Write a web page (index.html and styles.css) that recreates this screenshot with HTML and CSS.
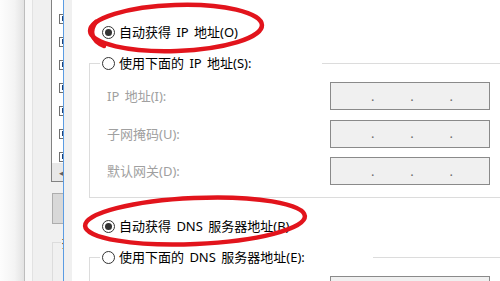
FILE: index.html
```html
<!DOCTYPE html>
<html lang="zh-CN">
<head>
<meta charset="utf-8">
<title>Internet 协议版本 4 (TCP/IPv4) 属性</title>
<link rel="stylesheet" href="styles.css">
</head>
<body>
<div class="screen">
  <div class="shadow"></div>
  <div class="edge"></div>
  <div class="band"></div>
  <div class="gutter"></div>
  <div class="side">
    <div class="listbox">
      <div class="items">
        <div class="item"><span class="chk"></span></div>
        <div class="item"><span class="chk"></span></div>
        <div class="item"><span class="chk"></span></div>
        <div class="item"><span class="chk"></span></div>
        <div class="item"><span class="chk"></span></div>
        <div class="item"><span class="chk"></span></div>
        <div class="item"><span class="chk"></span></div>
      </div>
      <div class="hscroll"><span class="arrow">◂</span></div>
    </div>
    <div class="sidebtn"></div>
    <fieldset class="sidegroup"><legend class="sidegroup-label">描述</legend></fieldset>
  </div>
  <div class="focus"></div>
  <div class="gutter2"></div>
  <div class="dialog">
    <div class="radio-row"><span class="radio checked"></span><span>自动获得 IP 地址(O)</span></div>
    <fieldset class="group">
      <legend class="legend legend-ip"><span class="radio"></span><span>使用下面的 IP 地址(S):</span></legend>
      <div class="fields">
        <span class="label">IP 地址(I):</span>
        <div class="ipbox"><span>.</span><span>.</span><span>.</span></div>
        <span class="label">子网掩码(U):</span>
        <div class="ipbox"><span>.</span><span>.</span><span>.</span></div>
        <span class="label">默认网关(D):</span>
        <div class="ipbox"><span>.</span><span>.</span><span>.</span></div>
      </div>
    </fieldset>
    <div class="radio-row row-dns"><span class="radio checked"></span><span>自动获得 DNS 服务器地址(B)</span></div>
    <fieldset class="group">
      <legend class="legend legend-dns"><span class="radio"></span><span>使用下面的 DNS 服务器地址(E):</span></legend>
      <div class="fields">
        <span class="label"></span>
        <div class="ipbox"></div>
      </div>
    </fieldset>
  </div>
</div>
<svg class="marks" width="500" height="281" viewBox="0 0 500 281" aria-hidden="true">
  <ellipse cx="176" cy="28" rx="86" ry="23" transform="rotate(-2 176 28)" />
  <path d="M96 22 C 90 30, 90 40, 104 46" />
  <ellipse cx="195" cy="221" rx="110" ry="23" transform="rotate(-2.5 195 221)" />
</svg>
</body>
</html>
```
FILE: styles.css
```css
* { box-sizing: border-box; }
html, body { margin: 0; padding: 0; }
body {
  width: 500px;
  height: 281px;
  overflow: hidden;
  position: relative;
  background: #fff;
  color: #000;
  font-family: "Noto Sans", "Noto Sans CJK SC", sans-serif;
  font-size: 13px;
  word-spacing: 2px;
}
.screen { display: flex; height: 281px; }
.shadow { width: 24px; background: linear-gradient(to right, #fdfdfd, #f4f4f4 60%, #e3e3e3); }
.edge { width: 1px; background: #bdbdbd; }
.band { width: 8px; background: #f8f8f8; border-right: 1px solid #e2e2e2; }
.gutter { width: 18px; background: #f0f0f0; }
.side {
  width: 12px;
  background: #f0f0f0;
  display: flex;
  flex-direction: column;
  overflow: hidden;
}
.listbox {
  height: 182px;
  flex: none;
  border-left: 1px solid #828282;
  border-bottom: 1px solid #828282;
  background: #fff;
  display: flex;
  flex-direction: column;
}
.items { height: 163px; overflow: hidden; padding-top: 7px; }
.item { height: 23px; display: flex; align-items: center; }
.chk {
  margin-left: 7px;
  width: 10px;
  height: 10px;
  flex: none;
  border: 1px solid #707070;
  background: #fff;
  display: flex;
  align-items: center;
}
.chk::after {
  content: "";
  width: 2px;
  height: 5px;
  margin-left: 2px;
  background: #23406f;
}
.hscroll {
  flex: 1;
  background: #e8e8e8;
  display: flex;
  align-items: center;
  justify-content: flex-end;
}
.arrow { font-size: 9px; line-height: 1; color: #606060; margin-right: -1px; }
.sidebtn {
  flex: none;
  margin: 11px 0 0 1px;
  height: 31px;
  background: #d8d8d8;
  border: 1px solid #adadad;
  border-right: none;
}
.sidegroup {
  flex: 1;
  margin: 10px 0 0 1px;
  padding: 0 0 0 8px;
  border: 1px solid #dcdcdc;
  border-right: none;
  border-bottom: none;
  min-width: 0;
}
.sidegroup-label { padding: 0 0 0 1px; line-height: 16px; white-space: nowrap; color: #000; }
.focus { width: 1px; background: #5b9ce3; }
.gutter2 { width: 8px; background: #f0f0f0; }
.dialog {
  flex: 1;
  min-width: 0;
  overflow: hidden;
  background: #fff;
  padding: 24px 0 0 17px;
}
.radio-row {
  display: flex;
  align-items: center;
  height: 16px;
  line-height: 16px;
  white-space: nowrap;
  padding-left: 13px;
}
.row-dns { margin-top: 20px; }
.radio {
  width: 13px;
  height: 13px;
  flex: none;
  margin-right: 4px;
  border: 1px solid #333;
  border-radius: 50%;
  background: #fff;
  display: inline-flex;
  align-items: center;
  justify-content: center;
}
.radio.checked::after {
  content: "";
  width: 7px;
  height: 7px;
  border-radius: 50%;
  background: #333;
}
.group {
  margin: 15px -30px 0 0;
  padding: 11px 0 12px 10px;
  border: 1px solid #dcdcdc;
  border-right: none;
  min-width: 0;
}
.legend {
  display: flex;
  align-items: center;
  height: 16px;
  line-height: 16px;
  padding: 0 0 0 2px;
  white-space: nowrap;
  background: #fff;
}
.legend-ip { width: 222px; }
.legend-dns { width: 273px; }
.fields {
  margin-left: 7px;
  display: grid;
  grid-template-columns: 223px 160px;
  grid-auto-rows: 28px;
  row-gap: 9.5px;
  align-items: center;
}
.label { color: #a0a0a0; line-height: 16px; white-space: nowrap; }
.ipbox {
  height: 28px;
  border: 1px solid #8a8a8a;
  background: #f0f0f0;
  display: flex;
  align-items: center;
  justify-content: space-evenly;
  padding-left: 4px;
  color: #6d6d6d;
  line-height: 13px;
}
.marks {
  position: absolute;
  top: 0;
  left: 0;
  pointer-events: none;
  fill: none;
  stroke: #e2141c;
  stroke-width: 4.5;
  stroke-linecap: round;
}
```
